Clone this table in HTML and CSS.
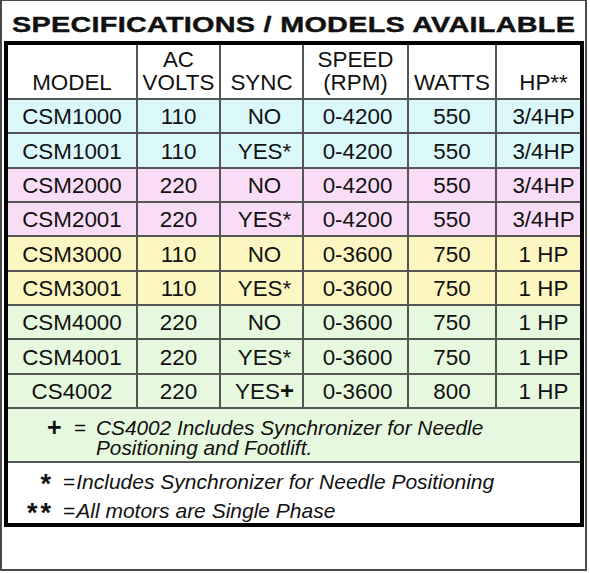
FILE: index.html
```html
<!DOCTYPE html>
<html>
<head>
<meta charset="utf-8">
<link rel="stylesheet" href="styles.css">
</head>
<body>
<div class="frame">
  <div class="title"><span class="title-text">SPECIFICATIONS / MODELS AVAILABLE</span></div>
  <div class="box">
    <table class="spec">
      <colgroup>
        <col class="w-model"><col class="w-volts"><col class="w-sync"><col class="w-speed"><col class="w-watts"><col class="w-hp">
      </colgroup>
      <thead>
        <tr>
          <th>MODEL</th>
          <th>AC<br>VOLTS</th>
          <th>SYNC</th>
          <th>SPEED<br>(RPM)</th>
          <th>WATTS</th>
          <th class="hp">HP**</th>
        </tr>
      </thead>
      <tbody>
        <tr class="cyan"><td>CSM1000</td><td>110</td><td class="sync">NO</td><td class="speed">0-4200</td><td>550</td><td class="hp">3/4HP</td></tr>
        <tr class="cyan"><td>CSM1001</td><td>110</td><td class="sync">YES*</td><td class="speed">0-4200</td><td>550</td><td class="hp">3/4HP</td></tr>
        <tr class="pink"><td>CSM2000</td><td>220</td><td class="sync">NO</td><td class="speed">0-4200</td><td>550</td><td class="hp">3/4HP</td></tr>
        <tr class="pink"><td>CSM2001</td><td>220</td><td class="sync">YES*</td><td class="speed">0-4200</td><td>550</td><td class="hp">3/4HP</td></tr>
        <tr class="yellow"><td>CSM3000</td><td>110</td><td class="sync">NO</td><td class="speed">0-3600</td><td>750</td><td class="hp">1 HP</td></tr>
        <tr class="yellow"><td>CSM3001</td><td>110</td><td class="sync">YES*</td><td class="speed">0-3600</td><td>750</td><td class="hp">1 HP</td></tr>
        <tr class="green"><td>CSM4000</td><td>220</td><td class="sync">NO</td><td class="speed">0-3600</td><td>750</td><td class="hp">1 HP</td></tr>
        <tr class="green"><td>CSM4001</td><td>220</td><td class="sync">YES*</td><td class="speed">0-3600</td><td>750</td><td class="hp">1 HP</td></tr>
        <tr class="green"><td>CS4002</td><td>220</td><td class="sync">YES<span class="bplus">+</span></td><td class="speed">0-3600</td><td>800</td><td class="hp">1 HP</td></tr>
        <tr class="green">
          <td colspan="6" class="plus-cell">
            <div class="plus-note">
              <span class="plus-sym">+</span>
              <span class="plus-eq">=</span>
              <span class="plus-txt">CS4002 Includes Synchronizer for Needle<br>Positioning and Footlift.</span>
            </div>
          </td>
        </tr>
      </tbody>
    </table>
    <div class="notes">
      <span class="star"><span class="ast">*</span></span><span class="note-txt"><span class="eq">=</span>Includes Synchronizer for Needle Positioning</span>
      <span class="star"><span class="ast">**</span></span><span class="note-txt"><span class="eq">=</span>All motors are Single Phase</span>
    </div>
  </div>
</div>
</body>
</html>
```

FILE: styles.css
```css
html, body {
  margin: 0;
  padding: 0;
  background: #ffffff;
}

body {
  font-family: "Liberation Sans", Arial, sans-serif;
  color: #111;
}

.frame {
  box-sizing: border-box;
  width: 587px;
  height: 571px;
  border: 2px solid #4a4a4a;
  border-top-width: 1px;
  background: #fff;
}

.title {
  box-sizing: border-box;
  height: 40px;
  padding: 11px 0 0 10px;
  line-height: 26px;
  font-size: 22px;
  font-weight: bold;
  white-space: nowrap;
}

.title-text {
  display: inline-block;
  transform: scaleX(1.31);
  transform-origin: left center;
  letter-spacing: 0.2px;
  -webkit-text-stroke: 0.4px #111;
}

.box {
  box-sizing: border-box;
  width: 580px;
  height: 486px;
  margin-left: 2px;
  border: 4px solid #000;
  background: #fff;
}

.spec {
  width: 572px;
  table-layout: fixed;
  border-collapse: collapse;
  font-size: 22.4px;
}

.w-model { width: 129px; }
.w-volts { width: 83px; }
.w-sync { width: 83px; }
.w-speed { width: 105px; }
.w-watts { width: 88px; }
.w-hp { width: 84px; }

.spec th,
.spec td {
  padding: 0;
  text-align: center;
  border-left: 2px solid #555;
  border-bottom: 2px solid #555;
  white-space: nowrap;
}

.spec th:first-child,
.spec td:first-child {
  border-left: none;
}

.spec th {
  height: 54px;
  font-weight: normal;
  vertical-align: bottom;
  line-height: 22.5px;
  padding-bottom: 4px;
  box-sizing: border-box;
}

.spec td {
  height: 34.35px;
  line-height: 22px;
  vertical-align: middle;
  padding-top: 2px;
  box-sizing: border-box;
}

.spec .sync { padding-left: 6px; }
.spec .speed { padding-left: 4px; }
.spec .hp { padding-left: 10px; }

.bplus {
  font-weight: bold;
  font-size: 24px;
}

.cyan td { background: #daf7fa; }
.pink td { background: #f9ddf6; }
.yellow td { background: #fcf7c0; }
.green td { background: #e6f8de; }

.spec td.plus-cell {
  height: auto;
  text-align: left;
  padding: 9px 0 4px 0;
  vertical-align: top;
}

.plus-note {
  display: flex;
  align-items: flex-start;
  font-size: 20.8px;
  line-height: 19.5px;
}

.plus-sym {
  font-weight: bold;
  font-size: 25px;
  margin-left: 39px;
  width: 27px;
}

.plus-eq {
  width: 22px;
}

.plus-txt {
  font-style: italic;
}

.notes {
  display: grid;
  grid-template-columns: 46px auto;
  column-gap: 9px;
  align-content: start;
  padding-top: 4px;
  font-size: 21px;
  line-height: 29px;
}

.star {
  text-align: right;
  font-weight: bold;
  font-size: 27px;
}

.ast {
  display: inline-block;
  line-height: 0;
  vertical-align: -3px;
  letter-spacing: 3px;
}

.note-txt {
  font-style: italic;
  white-space: nowrap;
}

.eq {
  font-style: normal;
  margin-right: 1px;
}
```
